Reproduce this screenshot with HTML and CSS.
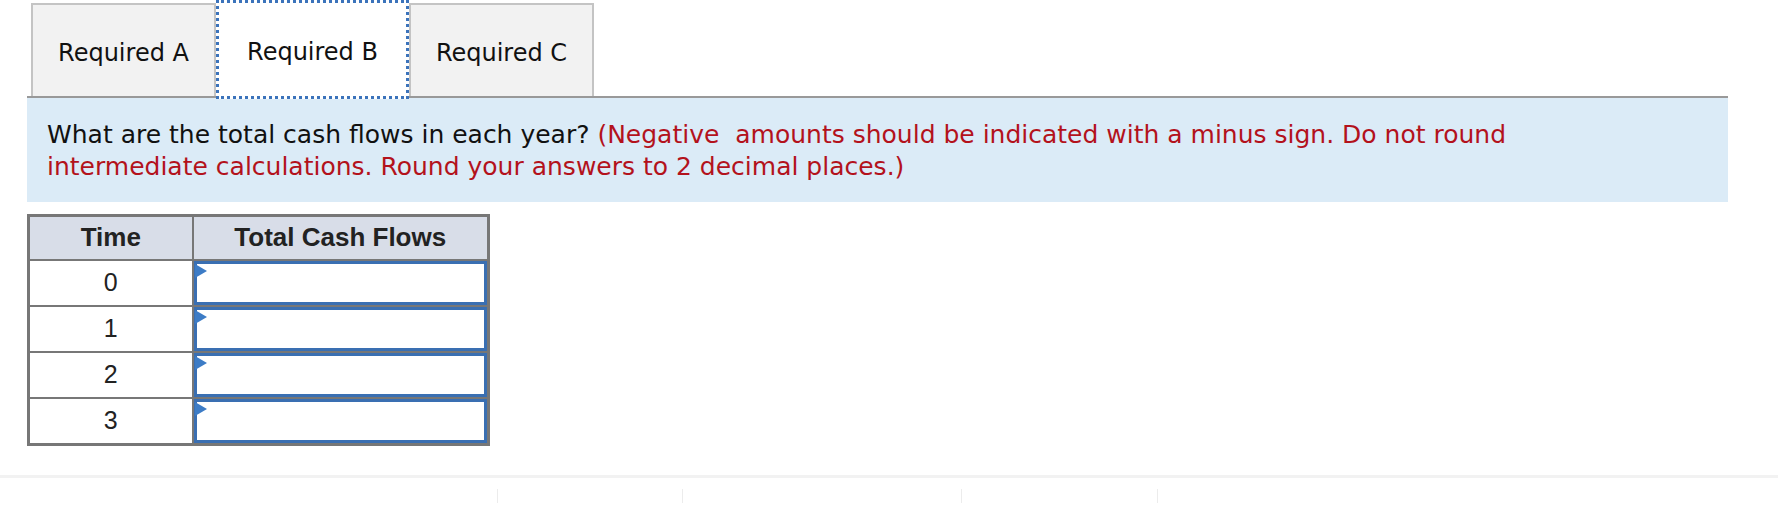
FILE: index.html
```html
<!DOCTYPE html>
<html>
<head>
<meta charset="utf-8">
<link rel="stylesheet" href="styles.css">
</head>
<body>
<div class="page">
  <div class="tabs">
    <div class="tab">Required A</div>
    <div class="tab tab-active">Required B</div>
    <div class="tab">Required C</div>
  </div>
  <div class="question">
    <p class="q-text">What are the total cash flows in each year? <span class="q-note">(Negative&nbsp; amounts should be indicated with a minus sign. Do not round intermediate calculations. Round your answers to 2 decimal places.)</span></p>
  </div>
  <table class="grid">
    <thead>
      <tr><th class="c-time">Time</th><th class="c-cash">Total Cash Flows</th></tr>
    </thead>
    <tbody>
      <tr><td class="c-time">0</td><td class="c-input"><div class="inp"><span class="flag"></span></div></td></tr>
      <tr><td class="c-time">1</td><td class="c-input"><div class="inp"><span class="flag"></span></div></td></tr>
      <tr><td class="c-time">2</td><td class="c-input"><div class="inp"><span class="flag"></span></div></td></tr>
      <tr><td class="c-time">3</td><td class="c-input"><div class="inp"><span class="flag"></span></div></td></tr>
    </tbody>
  </table>
</div>
<div class="footer">
  <div class="f-seg f-seg1"></div>
  <div class="f-seg f-seg2"></div>
  <div class="f-seg f-seg3"></div>
  <div class="f-seg f-seg4"></div>
</div>
</body>
</html>
```

FILE: styles.css
```css
html, body {
  margin: 0;
  padding: 0;
  background: #fff;
}
.page {
  margin-left: 27px;
  width: 1701px;
  padding-top: 3px;
}
.tabs {
  display: flex;
  padding-left: 4px;
  border-bottom: 2px solid #999;
  height: 93px;
}
.tab {
  box-sizing: border-box;
  height: 93px;
  display: flex;
  align-items: center;
  justify-content: center;
  font-family: "DejaVu Sans", Verdana, sans-serif;
  font-size: 24px;
  color: #111;
  background: #f2f2f2;
  border: 2px solid #c4c4c4;
  border-bottom: none;
  width: 185px;
  padding-top: 4px;
}
.tab-active {
  background: #fff;
  width: 193px;
  border: 3px dotted #3b73bb;
  height: 99px;
  margin-top: -3px;
  margin-bottom: -3px;
  position: relative;
  z-index: 1;
  padding-top: 4px;
}
.question {
  background: #dbebf7;
  padding: 21px 90px 19px 20px;
}
.q-text {
  margin: 0;
  font-family: "DejaVu Sans", Verdana, sans-serif;
  font-size: 25px;
  line-height: 32px;
  color: #111;
}
.q-note { color: #b3121c; }
.grid {
  margin-top: 12px;
  border-collapse: collapse;
  border: 3px solid #777;
  font-family: "Liberation Sans", Arial, sans-serif;
  font-size: 25px;
  color: #222;
}
.grid th, .grid td {
  border: 2px solid #777;
  padding: 0;
  height: 44px;
  box-sizing: border-box;
  text-align: center;
}
.grid th {
  background: #d8dde8;
  font-weight: bold;
  font-size: 26px;
}
.c-time { width: 164px; }
.c-cash { width: 296px; }
.c-input {
  vertical-align: top;
}
.inp {
  position: relative;
  box-sizing: border-box;
  height: 44px;
  border: 3px solid #3a6fb2;
  background: #fff;
}
.flag {
  position: absolute;
  left: -2px;
  top: 0;
  width: 0;
  height: 0;
  border-top: 7px solid transparent;
  border-bottom: 7px solid transparent;
  border-left: 12px solid #3d7cc6;
}
.footer {
  margin-top: 29px;
  border-top: 3px solid #f2f2f2;
  display: flex;
  padding-top: 11px;
  height: 14px;
}
.f-seg {
  height: 14px;
  border-left: 1px solid #ececec;
}
.f-seg1 { margin-left: 497px; width: 184px; }
.f-seg2 { width: 278px; }
.f-seg3 { width: 195px; }
.f-seg4 { width: 10px; }
```
